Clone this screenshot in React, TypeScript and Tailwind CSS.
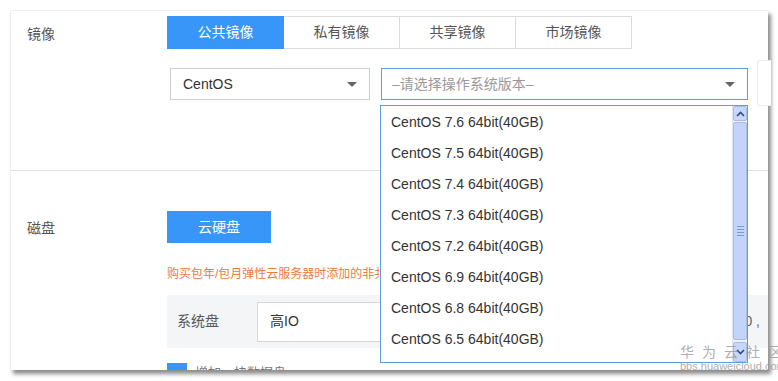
import React from 'react';

const versions = [
  'CentOS 7.6 64bit(40GB)',
  'CentOS 7.5 64bit(40GB)',
  'CentOS 7.4 64bit(40GB)',
  'CentOS 7.3 64bit(40GB)',
  'CentOS 7.2 64bit(40GB)',
  'CentOS 6.9 64bit(40GB)',
  'CentOS 6.8 64bit(40GB)',
  'CentOS 6.5 64bit(40GB)',
];

const tabs = ['公共镜像', '私有镜像', '共享镜像', '市场镜像'];

function Caret() {
  return <span className="h-0 w-0 border-x-[5px] border-t-[5px] border-x-transparent border-t-[#666]" />;
}

function Scrollbar() {
  return (
    <div className="flex w-[15px] flex-col border-l border-[#dde6f5] bg-[#eef3fb]">
      <div className="flex h-[15px] items-center justify-center rounded-[2px] border border-[#a8bde8] bg-[#c8d7f7]">
        <svg width="9" height="6" viewBox="0 0 9 6">
          <path d="M1 5 L4.5 1.5 L8 5" stroke="#2b4a8a" strokeWidth="1.6" fill="none" />
        </svg>
      </div>
      <div className="mt-px flex flex-1 items-center justify-center rounded-[2px] border border-[#a8bde8] bg-[#c3d4fb]">
        <div className="flex flex-col gap-[2px]">
          <span className="h-px w-[7px] bg-[#7e97cf]" />
          <span className="h-px w-[7px] bg-[#7e97cf]" />
          <span className="h-px w-[7px] bg-[#7e97cf]" />
          <span className="h-px w-[7px] bg-[#7e97cf]" />
        </div>
      </div>
      <div className="mt-[2px] flex h-[20px] items-center justify-center rounded-[2px] border border-[#a8bde8] bg-[#c8d7f7]">
        <svg width="9" height="6" viewBox="0 0 9 6">
          <path d="M1 1 L4.5 4.5 L8 1" stroke="#2b4a8a" strokeWidth="1.6" fill="none" />
        </svg>
      </div>
    </div>
  );
}

export default function App() {
  return (
    <div
      className="relative h-[381px] w-[778px] overflow-hidden bg-white pl-[10px] pt-[10px]"
      style={{ fontFamily: '"Liberation Sans", "Noto Sans CJK SC", sans-serif' }}
    >
      <div className="relative h-[360px] w-[758px] overflow-hidden border-l border-t border-[#eee] bg-white shadow-[3px_4px_4px_rgba(0,0,0,0.45)]">
        {/* 镜像 */}
        <div className="flex h-[160px] border-b border-[#e0e0e0]">
          <div className="w-[156px] pl-[16px] pt-[13px] text-[14px] text-[#555]">镜像</div>
          <div className="pt-[5px]">
            <div className="flex h-[33px]">
              {tabs.map((t, i) => (
                <div
                  key={t}
                  className={
                    i === 0
                      ? 'flex w-[117px] items-center justify-center bg-[#3896f8] text-[14px] text-white'
                      : 'flex w-[116px] items-center justify-center border border-l-0 border-[#dcdcdc] text-[14px] text-[#555]'
                  }
                >
                  {t}
                </div>
              ))}
            </div>
            <div className="mt-[19px] flex gap-[11px] pl-[3px]">
              <div className="flex h-[32px] w-[200px] items-center justify-between border border-[#cfcfcf] pl-[12px] pr-[12px] text-[14px] text-[#333]">
                CentOS
                <Caret />
              </div>
              <div className="flex h-[32px] w-[367px] items-center justify-between border border-[#5b9fe2] pl-[10px] pr-[12px] text-[14px] text-[#999]">
                –请选择操作系统版本–
                <Caret />
              </div>
            </div>
          </div>
        </div>

        {/* 磁盘 */}
        <div className="flex">
          <div className="w-[156px] pl-[16px] pt-[47px] text-[14px] text-[#555]">磁盘</div>
          <div className="flex-1 pt-[40px]">
            <div className="flex h-[32px] w-[104px] items-center justify-center bg-[#3896f8] text-[14px] text-white">
              云硬盘
            </div>
            <div className="mt-[22px] w-[212px] overflow-hidden whitespace-nowrap text-[12px] text-[#f07a3e]">
              购买包年/包月弹性云服务器时添加的非共享数据盘
            </div>
            <div className="mt-[12px] flex h-[53px] items-center bg-[#f4f5f7] pl-[10px] pr-[8px]">
              <span className="w-[80px] text-[14px] text-[#555]">系统盘</span>
              <div className="flex h-[40px] w-[300px] items-center border border-[#d6d6d6] bg-white pl-[12px] text-[14px] text-[#333]">
                高IO
              </div>
              <span className="ml-auto text-[14px] text-[#666]">40 ,</span>
            </div>
            <div className="mt-[15px] flex items-center gap-[8px]">
              <span className="h-[20px] w-[20px] bg-[#3896f8]" />
              <span className="text-[13px] text-[#777]">增加一块数据盘</span>
            </div>
          </div>
        </div>
      </div>

      {/* faint tooltip edge at right */}
      <div className="absolute left-[757px] top-[60px] h-[46px] w-[14px] rounded-l-[3px] border border-r-0 border-[#ededed] bg-white" />

      {/* dropdown list */}
      <div className="absolute left-[380px] top-[105px] flex h-[258px] w-[368px] border border-[#5b9fe2] bg-white">
        <div className="flex-1 pt-px">
          {versions.map((v) => (
            <div key={v} className="flex h-[31px] items-center pl-[10px] text-[14px] text-[#333]">
              {v}
            </div>
          ))}
        </div>
        <Scrollbar />
      </div>

      {/* watermark */}
      <div className="pointer-events-none absolute left-[680px] top-[344px] whitespace-nowrap text-[#9a9a9a] opacity-80">
        <div className="text-[14px] leading-[16px] tracking-[8px]">华为云社区</div>
        <div className="text-[11px] leading-[13px]">bbs.huaweicloud.com</div>
      </div>
    </div>
  );
}
